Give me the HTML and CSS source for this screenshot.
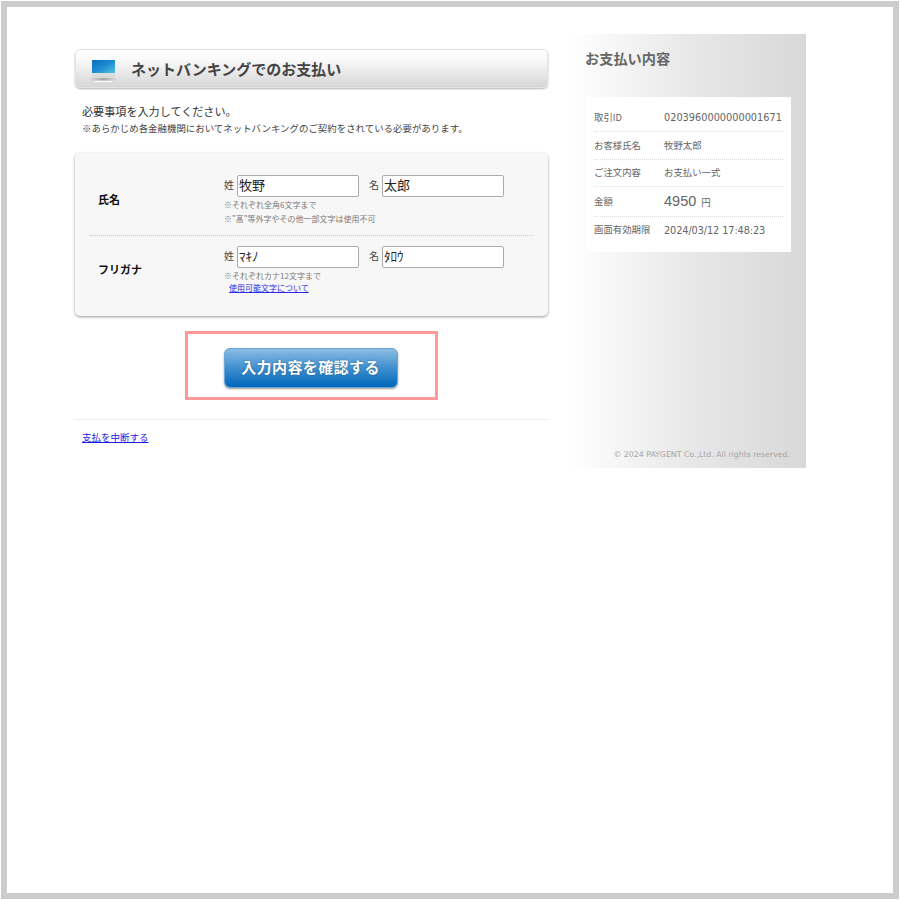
FILE: index.html
```html
<!DOCTYPE html>
<html lang="ja">
<head>
<meta charset="utf-8">
<title>ネットバンキングでのお支払い</title>
<link rel="stylesheet" href="styles.css">
</head>
<body>
<div class="frame">
  <div class="page">
    <main class="main">
      <h1 class="heading">
        <svg class="laptop" width="30" height="24" viewBox="0 0 30 24" aria-hidden="true">
          <defs>
            <linearGradient id="scr" x1="0" y1="0" x2="1" y2="1">
              <stop offset="0" stop-color="#0a6cc0"/>
              <stop offset="0.55" stop-color="#1f90d4"/>
              <stop offset="1" stop-color="#58c0dc"/>
            </linearGradient>
            <linearGradient id="bez" x1="0" y1="0" x2="0" y2="1">
              <stop offset="0" stop-color="#f2f2f2"/>
              <stop offset="1" stop-color="#d8d8d8"/>
            </linearGradient>
            <linearGradient id="base" x1="0" y1="0" x2="1" y2="0">
              <stop offset="0" stop-color="#e0e0e0"/>
              <stop offset="0.5" stop-color="#a8a8a8"/>
              <stop offset="1" stop-color="#e0e0e0"/>
            </linearGradient>
          </defs>
          <rect x="4" y="1" width="23" height="18" fill="url(#bez)"/>
          <rect x="4" y="1" width="23" height="13" fill="url(#scr)"/>
          <rect x="1" y="19" width="29" height="2.5" rx="1" fill="url(#base)"/>
          <rect x="7" y="22" width="17" height="1" fill="#fff"/>
        </svg>
        <span>ネットバンキングでのお支払い</span>
      </h1>
      <p class="lead">必要事項を入力してください。</p>
      <p class="lead-note">※あらかじめ各金融機関においてネットバンキングのご契約をされている必要があります。</p>

      <section class="form-card">
        <div class="form-row row-name">
          <div class="row-label">氏名</div>
          <div class="row-body">
            <div class="fields">
              <label class="field">姓<input class="text-input" type="text" value="牧野"></label>
              <label class="field">名<input class="text-input" type="text" value="太郎"></label>
            </div>
            <p class="note">※それぞれ全角6文字まで</p>
            <p class="note">※"髙"等外字やその他一部文字は使用不可</p>
          </div>
        </div>
        <div class="form-row row-kana">
          <div class="row-label">フリガナ</div>
          <div class="row-body">
            <div class="fields">
              <label class="field">姓<input class="text-input" type="text" value="ﾏｷﾉ"></label>
              <label class="field">名<input class="text-input" type="text" value="ﾀﾛｳ"></label>
            </div>
            <p class="note">※それぞれカナ12文字まで</p>
            <p class="note note-link"><a href="#">使用可能文字について</a></p>
          </div>
        </div>
      </section>

      <div class="action">
        <div class="highlight">
          <button class="confirm" type="button">入力内容を確認する</button>
        </div>
      </div>

      <div class="abort"><a href="#">支払を中断する</a></div>
    </main>

    <aside class="side">
      <h2 class="side-title">お支払い内容</h2>
      <dl class="summary">
        <div class="summary-row r1"><dt>取引ID</dt><dd class="latin">0203960000000001671</dd></div>
        <div class="summary-row r2"><dt>お客様氏名</dt><dd>牧野太郎</dd></div>
        <div class="summary-row r3"><dt>ご注文内容</dt><dd>お支払い一式</dd></div>
        <div class="summary-row r4"><dt>金額</dt><dd><span class="amount">4950</span> 円</dd></div>
        <div class="summary-row r5"><dt>画面有効期限</dt><dd class="latin date">2024/03/12 17:48:23</dd></div>
      </dl>
      <p class="copyright">© 2024 PAYGENT Co.,Ltd. All rights reserved.</p>
    </aside>
  </div>
</div>
</body>
</html>
```
FILE: styles.css
```css
* { box-sizing: border-box; }
html, body { margin: 0; padding: 0; background: #fff; }
body {
  font-family: "Noto Sans CJK JP", "Noto Sans", sans-serif;
  color: #333;
}
.frame {
  width: 898px;
  height: 898px;
  margin: 1px 0 0 1px;
  border: 6px solid #ccc;
  padding-top: 27px;
  padding-left: 67px;
}
.page { display: flex; gap: 22px; align-items: flex-start; }

.main { width: 474px; padding-top: 15px; }
.heading {
  margin: 0 0 0 1px;
  width: 473px;
  height: 39px;
  display: flex;
  align-items: center;
  gap: 13px;
  padding-left: 12px;
  border: 1px solid #e2e2e2;
  border-radius: 5px;
  background: linear-gradient(#ffffff, #fafafa 25%, #d6d6d6);
  box-shadow: 0 1px 2px rgba(0,0,0,.3);
  font-size: 15px;
  font-weight: 700;
  color: #444;
}
.laptop { flex: none; margin-top: 5px; }
.lead { margin: 15px 0 0 8px; font-size: 11.1px; line-height: 16px; color: #333; }
.lead-note { margin: 2px 0 0 8px; font-size: 9.45px; line-height: 14px; color: #444; white-space: nowrap; }

.form-card {
  margin: 18px 0 0 1px;
  width: 473px;
  height: 163px;
  background: #f7f7f7;
  border-radius: 5px;
  box-shadow: 0 1px 3px rgba(0,0,0,.4);
  padding: 0 16px 0 15px;
}
.form-row { display: flex; }
.row-name { height: 83px; padding-top: 22px; border-bottom: 1px dotted #ccc; }
.row-kana { height: 80px; padding-top: 10px; }
.row-label {
  width: 134px;
  padding-left: 8px;
  font-size: 11px;
  line-height: 16px;
  font-weight: 700;
  color: #111;
  align-self: flex-start;
}
.row-name .row-label { margin-top: 16px; }
.row-kana .row-label { margin-top: 15px; }
.fields { display: flex; gap: 10px; }
.field { display: flex; align-items: flex-start; gap: 3px; font-size: 10px; line-height: 20px; color: #444; }
.text-input {
  width: 122px;
  height: 22px;
  padding: 0 1px 3px;
  border: 1px solid #aaa;
  border-radius: 2px;
  background: #fff;
  font-family: "Noto Sans CJK JP", sans-serif;
  font-size: 13px;
  color: #222;
  outline: none;
}
.note { margin: 0; font-size: 8px; line-height: 14px; color: #777; white-space: nowrap; }
.fields + .note { margin-top: 1px; }
.row-kana .note { line-height: 12px; }
.row-kana .fields + .note { margin-top: 2px; }
.note-link { padding-left: 5px; }
.note-link a { color: #2a2ae8; }

.action { display: flex; margin-top: 15px; padding-left: 111px; }
.highlight {
  width: 253px;
  height: 69px;
  padding: 4px 2px 0 0;
  border: 3px solid #ff9999;
  display: flex;
  align-items: center;
  justify-content: center;
}
.confirm {
  width: 174px;
  height: 40px;
  padding: 0 0 3px;
  border: 1px solid #6aa5d5;
  border-radius: 6px;
  background: linear-gradient(#8bbde2, #3f8fcf 50%, #0066ba);
  box-shadow: 0 1px 2px rgba(0,0,0,.4);
  color: #fff;
  font-family: inherit;
  font-size: 15px;
  font-weight: 700;
  letter-spacing: .4px;
  text-shadow: 0 0 2px rgba(0,0,0,.35);
}
.abort {
  margin: 19px 0 0 1px;
  padding: 10px 0 0 7px;
  border-top: 1px dotted #ddd;
  font-size: 9.5px;
  line-height: 14px;
}
.abort a { color: #1a1ae8; }

.side {
  width: 236px;
  height: 434px;
  padding: 15px 16px 0;
  background: linear-gradient(to right, #fff, #e8e8e8 50%, #d8d8d8);
  display: flex;
  flex-direction: column;
}
.side-title { margin: 0 0 0 -1px; font-size: 14.2px; line-height: 18px; font-weight: 700; color: #666; }
.summary { margin: 30px 0 0; width: 205px; height: 155px; padding: 7px 8px 0 8px; background: #fff; }
.summary-row { display: flex; align-items: center; padding-bottom: 2px; border-bottom: 1px dotted #ddd; font-size: 9.4px; color: #666; }
.r1 { height: 28px; }
.r2 { height: 28px; }
.r3 { height: 27px; }
.r4 { height: 30px; }
.r5 { height: 28px; padding-bottom: 4px; border-bottom: 0; }
.summary-row dt { width: 70px; flex: none; }
.summary-row dd { margin: 0; white-space: nowrap; }
.summary-row .latin { margin-top: 2px; font-family: "DejaVu Sans", sans-serif; font-size: 9.75px; }
.date { letter-spacing: -.1px; }
.amount { font-family: "Liberation Sans", sans-serif; font-size: 14.5px; margin-right: 3px; }
.copyright {
  margin: auto 0 7px;
  text-align: right;
  font-family: "DejaVu Sans", sans-serif;
  font-size: 7.8px;
  line-height: 12px;
  color: #a5a5a5;
  white-space: nowrap;
}
```
